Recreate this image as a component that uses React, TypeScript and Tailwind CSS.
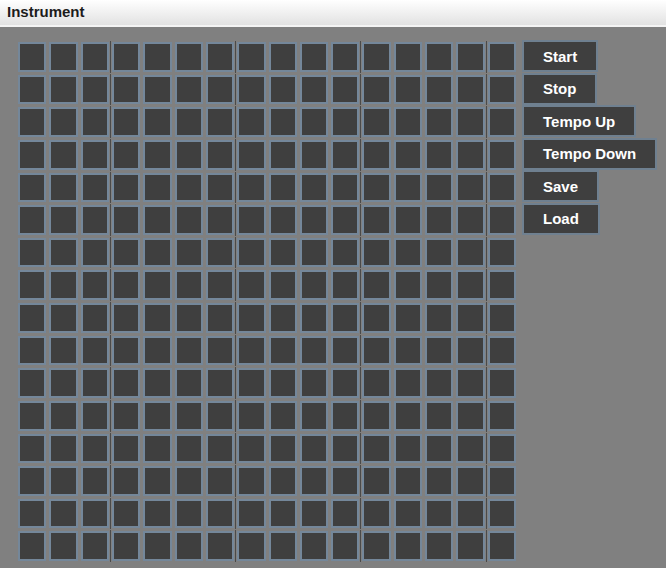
const COLS = 16;
const ROWS = 16;
const DIVIDERS = [2, 6, 10, 14];

const buttons = ["Start", "Stop", "Tempo Up", "Tempo Down", "Save", "Load"];

function Cell({ col }: { col: number }) {
  const divider = DIVIDERS.includes(col);
  return (
    <div
      className={
        divider
          ? "relative border-2 border-[#74879a] bg-[#3f3f3f] after:absolute after:-right-[4px] after:-top-[3px] after:-bottom-[3px] after:w-px after:bg-[#4a4a4a]"
          : "relative border-2 border-[#74879a] bg-[#3f3f3f]"
      }
    />
  );
}

export default function App() {
  const cells = [];
  for (let r = 0; r < ROWS; r++) {
    for (let c = 0; c < COLS; c++) {
      cells.push(<Cell key={`${r}-${c}`} col={c} />);
    }
  }

  return (
    <div className="w-[666px] h-[568px] bg-[#808080] flex flex-col font-['Liberation_Sans',Arial,sans-serif] overflow-hidden">
      <div className="h-[27px] shrink-0 bg-gradient-to-b from-[#ffffff] to-[#e2e2e2] border-b-2 border-[#f4f4f4] flex items-center px-[7px]">
        <span className="text-[15px] font-bold text-[#1c1c1c] leading-none -mt-[3px]">Instrument</span>
      </div>

      <div className="flex items-start pl-[18px] pt-[15px] gap-[6px]">
        <div className="grid grid-cols-16 grid-rows-16 gap-x-[3px] gap-y-[3px] w-[498px] h-[519px]">
          {cells}
        </div>

        <div className="flex flex-col items-start gap-[0.5px] -mt-[2px]">
          {buttons.map((b) => (
            <button
              key={b}
              className="h-[32px] px-[19px] border-2 border-[#6f8090] bg-[#3f3f3f] text-white text-[15px] font-bold leading-none"
            >
              {b}
            </button>
          ))}
        </div>
      </div>
    </div>
  );
}
